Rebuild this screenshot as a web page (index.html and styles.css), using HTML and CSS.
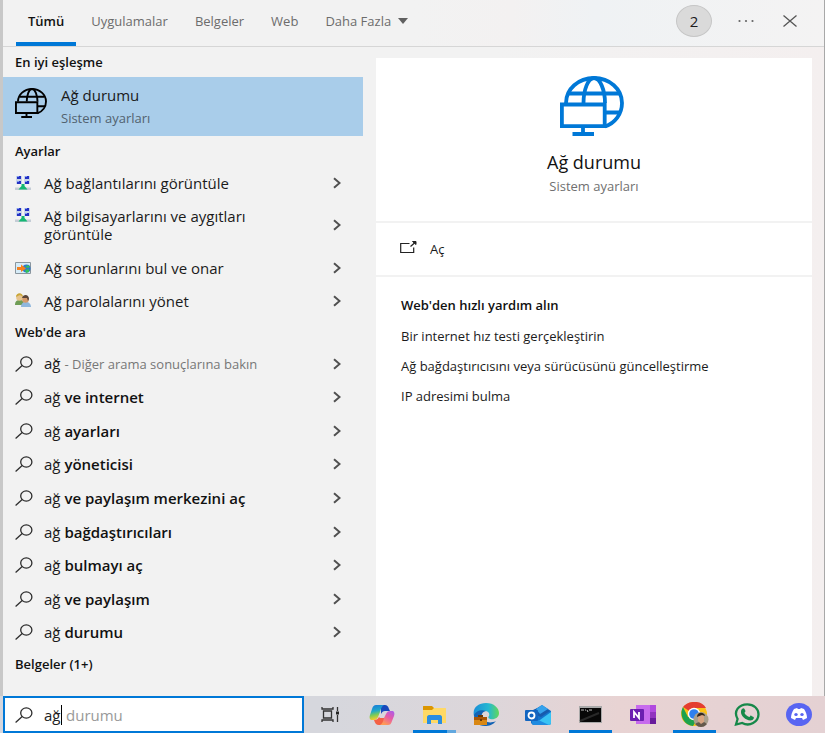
FILE: index.html
```html
<!DOCTYPE html>
<html lang="tr">
<head>
<meta charset="utf-8">
<meta name="viewport" content="width=device-width, initial-scale=1">
<title>Arama</title>
<link rel="stylesheet" href="styles.css">
</head>
<body>
<svg class="defs" aria-hidden="true">
  <symbol id="globe" viewBox="0 0 68 60">
    <g fill="none" stroke="currentColor" stroke-width="3.8">
      <path d="M6 27C6 13 18.500 2 34 2s28 11 28 25c0 11-7 20-17 23.500"/>
      <path d="M23.500 27C23.500 14 28 2 34 2s11 12 11 25M9 17.500h50M46 36.500h14"/>
      <path d="M1.900 28.500h42.800v21.600H1.900zM23 51v7M12.500 58h21.500"/>
    </g>
  </symbol>
  <symbol id="lens" viewBox="0 0 18 16">
    <g fill="none" stroke="#2c2c2c" stroke-width="1.300"><ellipse cx="11.300" cy="6" rx="5.600" ry="5.100"/><path d="M7.200 9.600L.6 15.400"/></g>
  </symbol>
  <symbol id="chev" viewBox="0 0 8 12">
    <path d="M1 1.200L6.600 6 1 10.800" fill="none" stroke="#505050" stroke-width="2"/>
  </symbol>
  <symbol id="net" viewBox="0 0 16 16">
    <path d="M1 1h6v8H1zM9 1h6v8H9z" fill="#c9d4e8"/>
    <g fill="#2431c4"><path d="M2 1h4v3H2zM10 1h4v3h-4zM2 6h4v3H2zM10 6h4v3h-4z"/></g>
    <path d="M2 1h2v1H2zM10 1h2v1h-2zM2 6h2v1H2zM10 6h2v1h-2z" fill="#7f9bf0"/>
    <path d="M0 12.500h16V15H0z" fill="#c5cdd6"/><path d="M6.500 9h3v2l3 3.500h-9l3-3.500z" fill="#14b873"/>
  </symbol>
</svg>
<div class="window">
  <header class="top">
    <nav class="tabs">
      <button class="tab active">Tümü</button>
      <button class="tab">Uygulamalar</button>
      <button class="tab">Belgeler</button>
      <button class="tab">Web</button>
      <button class="tab">Daha Fazla <svg width="10" height="6" viewBox="0 0 10 6"><path d="M0 0h10L5 6z" fill="#606060"/></svg></button>
    </nav>
    <div class="tools">
      <button class="points">2</button>
      <button class="tool" aria-label="Seçenekler"><svg width="16" height="4" viewBox="0 0 16 4" fill="#666"><circle cx="1.500" cy="2" r="1.100"/><circle cx="8" cy="2" r="1.100"/><circle cx="14.500" cy="2" r="1.100"/></svg></button>
      <button class="tool" aria-label="Kapat"><svg width="14" height="12" viewBox="0 0 14 12"><path d="M.5.500l13 11M13.500.500l-13 11" stroke="#555" stroke-width="1.300"/></svg></button>
    </div>
  </header>
  <main class="body">
    <section class="results">
      <h2>En iyi eşleşme</h2>
      <a class="best" href="#">
        <svg width="34" height="30"><use href="#globe"/></svg>
        <span class="best-text"><span class="name">Ağ durumu</span><span class="sub">Sistem ayarları</span></span>
      </a>
      <h2>Ayarlar</h2>
      <ul class="settings">
        <li><a href="#"><svg width="16" height="16"><use href="#net"/></svg><span>Ağ bağlantılarını görüntüle</span></a><button aria-label="Ayrıntılar"><svg width="8" height="12"><use href="#chev"/></svg></button></li>
        <li class="tall"><a href="#"><svg width="16" height="16"><use href="#net"/></svg><span>Ağ bilgisayarlarını ve aygıtları görüntüle</span></a><button aria-label="Ayrıntılar"><svg width="8" height="12"><use href="#chev"/></svg></button></li>
        <li><a href="#"><svg width="16" height="12" viewBox="0 0 16 12"><path d="M.5.500h15v11H.5z" fill="#d6ecf8" stroke="#8a969e"/><circle cx="11.500" cy="6.500" r="4" fill="#2f78d0"/><path d="M10 5l3-2 2 2-2 1zM10 8l4-1v3l-3 1z" fill="#32c25b"/><path d="M2 5h4V2.500L11 6.500 6 10V8H2z" fill="#f5811f"/></svg><span>Ağ sorunlarını bul ve onar</span></a><button aria-label="Ayrıntılar"><svg width="8" height="12"><use href="#chev"/></svg></button></li>
        <li><a href="#"><svg width="16" height="15" viewBox="0 0 16 15"><path d="M0 12c0-4 2-5 5-5s4 2 4 5z" fill="#6f9d56"/><circle cx="4.500" cy="4.500" r="3.300" fill="#e6c38c"/><path d="M1 4c0-5 7-5 7 0-2-2-4-2-5-1z" fill="#c9a637"/><path d="M6 14c0-3.500 2-5 5-5s5 2 5 5z" fill="#8fb7dd"/><circle cx="10.500" cy="6.500" r="3.300" fill="#d69a6a"/><path d="M7 5c1-4 7-4 7 1l-1 2-1-3z" fill="#5a4539"/></svg><span>Ağ parolalarını yönet</span></a><button aria-label="Ayrıntılar"><svg width="8" height="12"><use href="#chev"/></svg></button></li>
      </ul>
      <h2>Web'de ara</h2>
      <ul class="web">
        <li><a href="#"><svg width="18" height="16"><use href="#lens"/></svg><span>ağ <small>- Diğer arama sonuçlarına bakın</small></span></a><button aria-label="Ayrıntılar"><svg width="8" height="12"><use href="#chev"/></svg></button></li>
        <li><a href="#"><svg width="18" height="16"><use href="#lens"/></svg><span>ağ <b>ve internet</b></span></a><button aria-label="Ayrıntılar"><svg width="8" height="12"><use href="#chev"/></svg></button></li>
        <li><a href="#"><svg width="18" height="16"><use href="#lens"/></svg><span>ağ <b>ayarları</b></span></a><button aria-label="Ayrıntılar"><svg width="8" height="12"><use href="#chev"/></svg></button></li>
        <li><a href="#"><svg width="18" height="16"><use href="#lens"/></svg><span>ağ <b>yöneticisi</b></span></a><button aria-label="Ayrıntılar"><svg width="8" height="12"><use href="#chev"/></svg></button></li>
        <li><a href="#"><svg width="18" height="16"><use href="#lens"/></svg><span>ağ <b>ve paylaşım merkezini aç</b></span></a><button aria-label="Ayrıntılar"><svg width="8" height="12"><use href="#chev"/></svg></button></li>
        <li><a href="#"><svg width="18" height="16"><use href="#lens"/></svg><span>ağ <b>bağdaştırıcıları</b></span></a><button aria-label="Ayrıntılar"><svg width="8" height="12"><use href="#chev"/></svg></button></li>
        <li><a href="#"><svg width="18" height="16"><use href="#lens"/></svg><span>ağ <b>bulmayı aç</b></span></a><button aria-label="Ayrıntılar"><svg width="8" height="12"><use href="#chev"/></svg></button></li>
        <li><a href="#"><svg width="18" height="16"><use href="#lens"/></svg><span>ağ <b>ve paylaşım</b></span></a><button aria-label="Ayrıntılar"><svg width="8" height="12"><use href="#chev"/></svg></button></li>
        <li><a href="#"><svg width="18" height="16"><use href="#lens"/></svg><span>ağ <b>durumu</b></span></a><button aria-label="Ayrıntılar"><svg width="8" height="12"><use href="#chev"/></svg></button></li>
      </ul>
      <h2 class="last">Belgeler (1+)</h2>
    </section>
    <section class="detail">
      <div class="hero">
        <svg width="68" height="60"><use href="#globe"/></svg>
        <h1>Ağ durumu</h1>
        <p>Sistem ayarları</p>
      </div>
      <a class="open" href="#"><svg width="17" height="13" viewBox="0 0 17 13"><path d="M9.500 2.500H.7v9h13V6.500M10.500 5.500l4-3.500" fill="none" stroke="#222" stroke-width="1.200"/><path d="M12.500.500H16v3z" fill="#222" stroke="#222"/></svg><span>Aç</span></a>
      <div class="help">
        <h3>Web'den hızlı yardım alın</h3>
        <a href="#">Bir internet hız testi gerçekleştirin</a>
        <a href="#">Ağ bağdaştırıcısını veya sürücüsünü güncelleştirme</a>
        <a href="#">IP adresimi bulma</a>
      </div>
    </section>
  </main>
</div>
<footer class="taskbar">
  <label class="search">
    <svg width="18" height="16"><use href="#lens"/></svg>
    <input type="text" value="ağ" aria-label="Ara"><span class="ghost">durumu</span>
  </label>
  <nav class="apps">
    <button aria-label="Görev Görünümü"><svg width="19" height="15" viewBox="0 0 19 15"><g fill="none" stroke="#333" stroke-width="1.300"><path d="M2.500 4h8v7h-8zM1 0v2h11V0M1 15v-2h11v2M16.500 0v4M16.500 8v7"/></g><path d="M15 4.500h3v3h-3z" fill="#222"/></svg></button>
    <button aria-label="Copilot"><svg width="26" height="22" viewBox="0 0 26 22">
      <defs><linearGradient id="ca" x2="0.200" y2="1"><stop stop-color="#1878dc"/><stop offset=".45" stop-color="#20a8c8"/><stop offset=".7" stop-color="#7acb58"/><stop offset="1" stop-color="#f3cd2b"/></linearGradient><linearGradient id="cb" x1="1" y1="0" x2="0.400" y2="1"><stop stop-color="#a75cf0"/><stop offset=".5" stop-color="#e65ba7"/><stop offset="1" stop-color="#ff9b55"/></linearGradient></defs>
      <path d="M12 1h4c2 0 3 1 4 4l1 2h-5c-2 0-3 1-4 3z" fill="#1749bc"/>
      <path d="M7 1h8c-2 1-3 3-4 7l-2 5c-1 2-2 3-4 3H3c-2 0-3-2-2-5l2-6c1-3 2-4 4-4z" fill="url(#ca)"/>
      <path d="M5 16c3 0 4-1 5-3l1 1h6l-3 7h-4c-3 0-4-2-5-5z" fill="#f46145"/>
      <path d="M19 21h-8c2-1 3-3 4-7l2-4c1-2 2-3 4-3h2c2 0 3 2 2 5l-2 5c-1 3-2 4-4 4z" fill="url(#cb)"/></svg></button>
    <button class="running multi" aria-label="Dosya Gezgini"><svg width="23" height="18" viewBox="0 0 23 18"><path d="M0 1c0-1 0-1 1-1h8l2 2v4H0z" fill="#dc9600"/><path d="M0 4h9l2-2h11c1 0 1 0 1 1v14H0z" fill="#ffd965"/><path d="M4 18v-7c0-1 1-2 2-2h11c1 0 2 1 2 2v7h-4v-4H8v4z" fill="#2a8de0"/></svg></button>
    <button aria-label="Microsoft Edge"><svg width="26" height="23" viewBox="0 0 26 23"><defs><linearGradient id="ed"><stop stop-color="#1b8ed8"/><stop offset=".6" stop-color="#25b9d0"/><stop offset="1" stop-color="#62d858"/></linearGradient></defs><path d="M1 13C-1 5 5 0 13 0s13 5 13 10c0 5-5 7-9 6-2-1-2-2-1-3 1-3-1-5-4-5-5 0-8 2-11 5z" fill="url(#ed)"/><path d="M1 12c2-4 7-6 12-4-4 1-5 4-4 7 2 4 8 6 14 3-3 4-7 5-11 5C5 23 1 19 1 12z" fill="#1262b4"/><path d="M1 14h13v8H1z" fill="#d98713"/><path d="M1 14h13v3H1z" fill="#a85505"/><path d="M5 14v-2h5v2M7 16h2v2H7z" fill="#693909"/></svg></button>
    <button aria-label="Outlook"><svg width="26" height="20" viewBox="0 0 26 20"><path d="M6 7L17 0l9 6v12c0 1-1 2-2 2H8l-2-2z" fill="#1374cc"/><path d="M8 5l9-4 8 5-9 6-8-3z" fill="#175bad"/><path d="M11 4l6-4 6 4-8 5z" fill="#35a2ec"/><path d="M26 7v11c0 1-1 2-2 2H8z" fill="#39c3f4"/><path d="M7 12l17 8H9c-1 0-2-1-2-2z" fill="#208be0"/><rect y="5" width="13" height="11" rx="1" fill="#1265c0"/><ellipse cx="6.500" cy="10.500" rx="3" ry="3" fill="none" stroke="#fff" stroke-width="1.800"/></svg></button>
    <button class="running" aria-label="Komut İstemi"><svg width="23" height="17" viewBox="0 0 23 17"><path d="M0 0h23v17H0z" fill="#a9a9a9"/><path d="M1 2h21v14H1z" fill="#080808"/><path d="M2 4h3M6 4h1M8 4l1 2M10 4h3" stroke="#bbb"/><path d="M1 15L20 7" stroke="#292929" stroke-width="2"/></svg></button>
    <button aria-label="OneNote"><svg width="26" height="20" viewBox="0 0 26 20"><path d="M6 0h19c1 0 1 0 1 1v18H6z" fill="#c76bed"/><path d="M20 0h6v7h-6z" fill="#b14adf"/><path d="M20 7h6v6h-6z" fill="#9134bf"/><path d="M20 13h6v6h-6z" fill="#681c9c"/><rect y="4" width="14" height="12" rx="1" fill="#6b1eb0"/><path d="M4 13V7l5 6V7" fill="none" stroke="#fff" stroke-width="1.800"/></svg></button>
    <button class="running" aria-label="Google Chrome"><svg width="28" height="25" viewBox="0 0 28 25"><ellipse cx="13" cy="12" rx="13" ry="12" fill="#fbc116"/><path d="M13 12L2 5C6-1 20-3 25 6H13z" fill="#e43d30"/><path d="M2 5C-2 12 2 23 12 24l5-8-10-1z" fill="#1ea24e"/><circle cx="13" cy="12" r="6.200" fill="#fff"/><circle cx="13" cy="12" r="4.800" fill="#2f80ee"/><clipPath id="face"><circle cx="20" cy="17.500" r="7.500"/></clipPath><g clip-path="url(#face)"><path d="M12 10h16v15H12z" fill="#aaa08d"/><path d="M13 25c0-4 4-5 8-5s5 2 6 5z" fill="#65594b"/><path d="M17 12h6v8l-3 2-3-3z" fill="#d8a582"/><path d="M16 15c0-6 8-5 8-1l-3-1z" fill="#332920"/></g></svg></button>
    <button aria-label="WhatsApp"><svg width="26" height="23" viewBox="0 0 26 23"><path d="M2 21.500l1.600-5.500C-1 8 5 1.300 13.300 1.300c6.500 0 11.200 4.500 11.200 10C24.500 19 15.500 24 8.200 20z" fill="none" stroke="#168849" stroke-width="2.300"/><path d="M8 6c1-1 2-1 2.500 0l1 2c0 1-1 1-1 2 1 2 3 3.500 5 4 1-1 1-2 2-1l2 1c1 1 0 2-1 3-5 2-12-4-11.500-8C7 8 7 7 8 6z" fill="#168849"/></svg></button>
    <button aria-label="Discord"><svg width="26" height="23" viewBox="0 0 26 23"><ellipse cx="13" cy="11.500" rx="13" ry="11.500" fill="#5865f2"/><path d="M8 6l3-1 1 1h2l1-1 3 1c2 3 3 6 3 9l-4 2-1-2H10l-1 2-4-2c0-3 1-6 3-9z" fill="#fff"/><ellipse cx="10" cy="11.500" rx="1.700" ry="1.600" fill="#5865f2"/><ellipse cx="16" cy="11.500" rx="1.700" ry="1.600" fill="#5865f2"/></svg></button>
  </nav>
</footer>
</body>
</html>
```
FILE: styles.css
```css
* { box-sizing: border-box; }
body {
  margin: 0;
  min-height: 100vh;
  display: flex;
  flex-direction: column;
  font-family: "Open Sans", "Noto Sans", sans-serif;
  font-size: 15px;
  line-height: 18px;
  color: #1b1b1b;
  background: #f2f2f2;
}
.defs { position: absolute; width: 0; height: 0; }
h1, h2, h3, p, ul { margin: 0; padding: 0; }
ul { list-style: none; }
a { color: inherit; text-decoration: none; }
button { font: inherit; color: inherit; background: none; border: 0; padding: 0; }
svg { display: block; flex: none; }

.window {
  flex: 1;
  display: flex;
  flex-direction: column;
  border-left: 3px solid #c8c8c8;
  border-right: 1px solid #a8a8a8;
}
.top {
  height: 47px;
  flex: none;
  display: flex;
  justify-content: space-between;
  border-bottom: 1px solid #d6d6d6;
  background: linear-gradient(90deg, #f2f2f2 50%, #f3f1f1 62%, #eff2f4 72%, #f4f3f3);
}
.tabs { display: flex; gap: 3px; padding-left: 13px; }
.tab {
  display: flex;
  align-items: center;
  gap: 7px;
  padding: 0 12px 4px;
  font-size: 13px;
  color: #6c6c6c;
}
.tab.active {
  color: #111;
  font-weight: 600;
  padding-bottom: 0;
  border-bottom: 4px solid #0078d7;
}
.tools { display: flex; align-items: center; padding: 0 12px 4px 0; }
.points {
  width: 36px;
  height: 32px;
  border-radius: 50%;
  border: 1px solid #c6c6c6;
  background: #dadada;
  margin-right: 12px;
}
.tool { width: 44px; height: 32px; display: flex; align-items: center; justify-content: center; }

.body { flex: 1; display: flex; gap: 13px; padding-right: 12px; background: linear-gradient(90deg, #f2f2f2 60%, #f4efef); }
.results { flex: 0 1 360px; display: flex; flex-direction: column; }
h2 { font-size: 13px; font-weight: 600; line-height: 30px; padding-left: 12px; color: #111; }
.best {
  display: flex;
  align-items: center;
  gap: 12px;
  padding: 8px 12px;
  background: #a9cdea;
}
.best-text { display: flex; flex-direction: column; gap: 3px; }
.best svg { margin-bottom: 8px; color: #000; }
.best-text span { line-height: 20px; }
.best-text .sub { font-size: 13px; color: #52626f; }
li { display: flex; align-items: center; padding: 0 22px 0 12px; min-height: 33px; }
li a { flex: 1; display: flex; align-items: center; gap: 13px; }
.web li a { gap: 11px; }
li a span { max-width: 230px; }
li.tall { min-height: 52px; }
li.tall a { align-items: flex-start; }
li b { font-weight: 600; color: #111; }
small { font-size: 13px; color: #777; }
.web { flex: 1; display: grid; grid-auto-rows: 1fr; }
.last { margin-bottom: 17px; }

.detail { flex: 1; margin-top: 11px; background: #fff; }
.hero {
  height: 165px;
  display: flex;
  flex-direction: column;
  align-items: center;
  padding-top: 18px;
  border-bottom: 2px solid #f2f2f2;
}
.hero svg { color: #0078d7; }
.hero h1 { margin-top: 14px; font-size: 18px; line-height: 24px; font-weight: 400; color: #111; }
.hero p { margin-top: 3px; font-size: 13px; line-height: 18px; color: #707070; }
.open {
  height: 54px;
  display: flex;
  align-items: center;
  gap: 13px;
  padding-left: 24px;
  border-bottom: 2px solid #f2f2f2;
  font-size: 13px;
}
.open svg { margin-bottom: 4px; }
.help { padding: 12px 25px; display: flex; flex-direction: column; font-size: 13px; line-height: 30px; }
.help h3 { font-size: 13px; font-weight: 600; line-height: 32px; color: #111; }

.taskbar { height: 37px; display: flex; background: linear-gradient(90deg, #d6d7dd 40%, #ddd6da 60%, #e8d3d3 75%, #e4d1d3); }
.search {
  width: 301px;
  margin-left: 3px;
  display: flex;
  align-items: center;
  padding: 0 10px;
  background: #fff;
  border: 2px solid #0078d7;
}
.search input {
  width: 18px;
  height: 20px;
  margin: 0 4px 0 11px;
  padding: 0;
  border: 0;
  border-right: 1px solid #000;
  outline: 0;
  background: none;
  font: inherit;
  color: #222;
}
.ghost { color: #999; }
.apps { flex: 1; display: flex; }
.apps button { flex: 1; display: flex; align-items: center; justify-content: center; border: solid transparent; border-width: 3px 0; background-clip: padding-box; }
.apps .running { background: linear-gradient(#0078d7, #0078d7) center bottom / 43px 3px no-repeat border-box; }
.apps .multi { background: linear-gradient(90deg, #0078d7 80%, #62a8df 80%) center bottom / 43px 3px no-repeat border-box; }
```
